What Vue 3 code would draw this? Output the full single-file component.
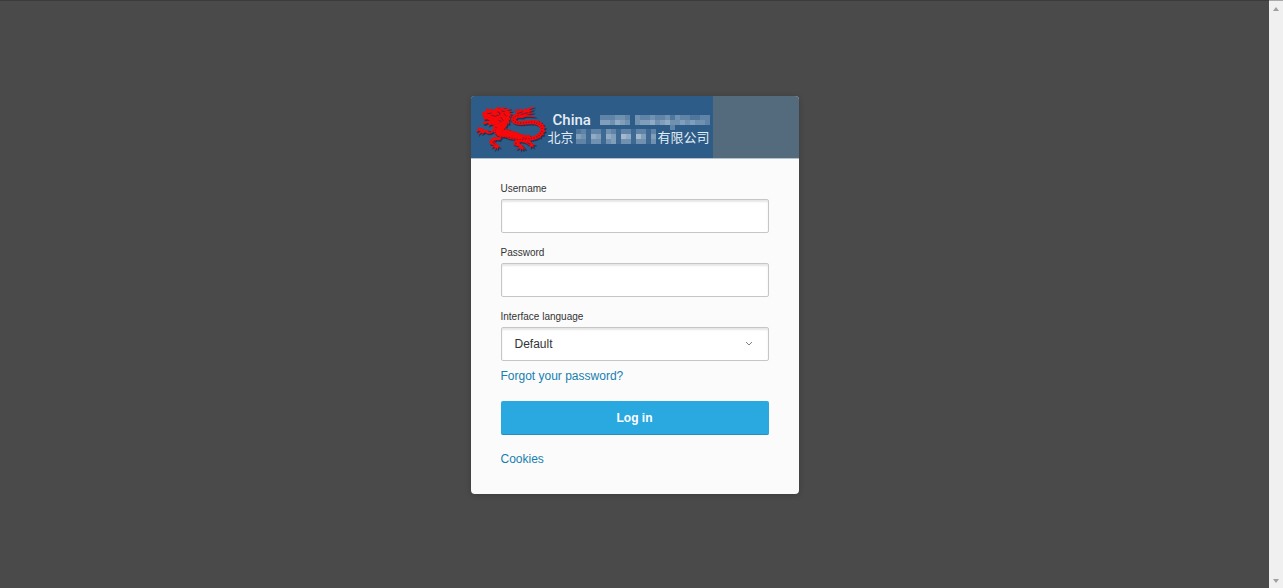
<template>
  <div class="screen">
    <main class="page">
      <section class="card">
        <header class="card-header">
          <div class="brand">
            <svg class="dragon" viewBox="30 48 213 141" aria-hidden="true">
              <g class="dragon-shade" transform="translate(3 4)">
                <path v-for="(d, i) in dragonParts" :key="i" :d="d" />
                <path class="dragon-tail" :d="dragonTail" />
              </g>
              <g class="dragon-body">
                <path v-for="(d, i) in dragonParts" :key="i" :d="d" />
                <path class="dragon-tail" :d="dragonTail" />
              </g>
              <path class="dragon-scales" :d="dragonTail" />
              <path class="dragon-scales" :d="dragonBelly" />
              <path class="dragon-lines" :d="dragonLines" />
            </svg>
            <div class="brand-text">
              <div class="line line-en">
                <span>China</span>
                <svg class="mosaic mosaic-en" viewBox="0 0 110 10" aria-hidden="true">
                  <rect v-for="(c, i) in enCells" :key="i" :x="c.x" :y="c.y" width="5" height="5" :fill-opacity="c.o" />
                </svg>
              </div>
              <div class="line line-zh" lang="zh">
                <span>北京</span>
                <svg class="mosaic mosaic-zh" viewBox="0 0 80 15" aria-hidden="true">
                  <rect v-for="(c, i) in zhCells" :key="i" :x="c.x" :y="c.y" width="5" height="5" :fill-opacity="c.o" />
                </svg>
                <span>有限公司</span>
              </div>
            </div>
          </div>
        </header>

        <form class="form" @submit.prevent>
          <div class="field">
            <label for="username">Username</label>
            <input id="username" v-model="username" type="text" autocomplete="username" />
          </div>
          <div class="field">
            <label for="password">Password</label>
            <input id="password" v-model="password" type="password" autocomplete="current-password" />
          </div>
          <div class="field">
            <label for="language">Interface language</label>
            <div class="select-wrap">
              <select id="language" v-model="language">
                <option value="default">Default</option>
              </select>
              <svg class="chevron" viewBox="0 0 8 6" aria-hidden="true">
                <path d="M1 1l3 3 3-3" />
              </svg>
            </div>
          </div>
          <a class="link" href="#">Forgot your password?</a>
          <button class="login" type="submit">Log in</button>
          <a class="link" href="#">Cookies</a>
        </form>
      </section>
    </main>

    <div class="scrollbar" aria-hidden="true">
      <svg viewBox="0 0 6 4"><path d="M0 4l3-4 3 4z" /></svg>
      <svg viewBox="0 0 6 4"><path d="M0 0l3 4 3-4z" /></svg>
    </div>
  </div>
</template>

<script setup>
import { ref } from 'vue'

const username = ref('')
const password = ref('')
const language = ref('default')

// Each digit is the brightness of one 5px cell
const toCells = (rows) =>
  rows.flatMap((row, y) =>
    [...row].map((n, x) => ({ x: x * 5, y: y * 5, o: Number(n) / 10 }))
  )

const enCells = toCells([
  '3334430433433424332233',
  '5546540455645644545443',
  '0000000000000030000000'
])

const zhCells = toCells([
  '2313314313313313',
  '5416516517617515',
  '3314414514414414'
])

const dragonParts = [
  // head and horns
  'M48 69l6-4 6-2 2-4-2-6 8 5 6 1 2-5 3 5 8-1 6-6 8-2-4 6 10-3 12-2-9 6 12-1 13-1-12 6 8 1 9 0-11 5 8 3 5 5-10-2 5 9-8-4 4 9 1 6-6-5 2 8-1 8-4-6-2 9-6 8-9 7-9 8-3 8-7-6 1-10 7-9 9-7-4-5-6 0-6 5-4 6-4-8-8 0-7 4 2-6-5-3-7 4-6-1 1-6 9-3 12-1-10-4-9 1z',
  // chest and belly
  'M91 100l16 2-2 8 0 8 6 5 11 2 15-2 14 3 14 6 14 4 14-1-2 12-15 2-16-3-14 3-16-2-13-5-16-1-13-8-8-11 1-14 6-10z',
  // front leg, left
  'M80 120l-9 4-6-3-8-1-9-5-8-1-2-4-4 4 4 4-6 2-2 6 8-4 6 2-6 4-2 8 6-7 6-1-1 6 5-4 5-3 8 4 8 0 8-4z',
  // front leg, lower
  'M83 141l-8 6-5 7 1 8 8 3 7 2-7 1-3 6 7-4 4 1-2 10 6-8 3 7 3-9 7 3-6-8-8-6-5-6 6-4 11 1 5-9z',
  // back leg
  'M150 148l-6 8-2 8 10 3 9 3-7 3-4 6 9-4 4 0-1 8 5-7 5 6 0-7 8 4-5-8-9-7-7-6 5-2 13 2 8 5 7 5 0 7 5-6 7 5-3-8 9-2-10-3-7-8-12-7z',
  // spines along the back
  'M110 122l1-8 5 7 4-8 4 9 5-7 3 10 6-5 3 9 7-5 3 9 7-4 3 8 8-3 3 7 10-4 0 9-16 5-20-6-24-6-14-2z',
  'M206 90l8 3 4-4 1 7 8-1-1 6 9 2-4 5 9 5-7 4 6 8-8 2 3 8-9 1-1 8-8-4-4 7-6-6 14-9 5-12-5-12-14-8z',
  // flame at the tip of the tail
  'M151 70l-7-13 11 8-2-12 9 9 3-7 4 6 12-8-3 7 14-8 14-2-12 6-5 5 16-4-11 7-9 4 20-1-13 5-11 3 16 1 14 5-17-1-15 0-10 4-13-1-8 8-7 6-3-8 6-8-6-2 8-4z'
]

const dragonTail =
  'M158 77Q141 78 141 89Q145 99 166 99L198 96Q222 98 229 114Q229 135 207 143Q189 149 171 143'

const dragonBelly = 'M91 111Q82 128 94 137Q111 143 128 142L153 148Q167 150 179 147'

const dragonLines =
  'M64 70l8 1 5-3M76 76l12 3 8-4M93 65l10 4-5 8M106 62l11 4M113 71l9 8M104 82l8 10M98 91l9 4M154 71l17-6M164 74l22-6M75 126l-9-3M87 151l-7 6 8 6M151 157l-3 6M169 169l7 4M184 158l9 5'
</script>

<style>
body {
  margin: 0;
  background: #4a4a4a;
}
</style>

<style scoped>
.screen {
  display: flex;
  min-height: 100vh;
  font-family: "Liberation Sans", Arial, sans-serif;
  font-size: 12px;
  line-height: 16px;
  color: #333;
  background: #4a4a4a;
}

.page {
  flex: 1;
  display: flex;
  justify-content: center;
  align-items: flex-start;
  box-sizing: border-box;
  padding: 95px 16px 32px;
  border-top: 1px solid #3a3a3a;
}

.card {
  width: 100%;
  max-width: 328px;
  overflow: hidden;
  background: #fbfbfb;
  border-radius: 4px;
  box-shadow: 0 1px 6px rgba(0, 0, 0, 0.2);
}

.card-header {
  display: flex;
  background: #546a7d;
  border-bottom: 1px solid #b4c2d0;
}

.brand {
  display: flex;
  align-items: center;
  box-sizing: border-box;
  width: 242px;
  height: 62px;
  padding-left: 5px;
  background: #2d5c88;
}

.dragon {
  flex: none;
  width: 71px;
  height: 47px;
  margin-top: 4px;
}

.dragon-body {
  fill: #f80808;
}

.dragon-shade {
  fill: #173858;
  stroke: #173858;
}

.dragon-tail {
  fill: none;
  stroke-width: 12px;
}

.dragon-body .dragon-tail {
  stroke: #f80808;
}

.dragon-scales {
  fill: none;
  stroke: #7d1830;
  stroke-width: 4px;
  stroke-dasharray: 3 5;
}

.dragon-lines {
  fill: none;
  stroke: #6b1e3c;
  stroke-width: 3px;
}

.brand-text {
  padding: 2px 0 0 1px;
  color: #e4edf5;
}

.line {
  display: flex;
  align-items: center;
  height: 17px;
  white-space: nowrap;
}

.line-en {
  gap: 9px;
  padding-left: 5px;
  font-family: Roboto, "Liberation Sans", sans-serif;
  font-size: 15px;
  font-weight: 500;
}

.line-zh {
  gap: 2px;
  font-family: "Noto Sans CJK SC", sans-serif;
  font-size: 13px;
}

.mosaic {
  flex: none;
  overflow: visible;
  fill: #d5e0ee;
  shape-rendering: crispEdges;
}

.mosaic-en {
  width: 110px;
  height: 10px;
}

.mosaic-zh {
  width: 80px;
  height: 15px;
}

.form {
  display: flex;
  flex-direction: column;
  align-items: flex-start;
  padding: 22px 30px 27px;
}

.field {
  display: flex;
  flex-direction: column;
  gap: 2px;
  width: 100%;
  margin-bottom: 12px;
}

.field:nth-of-type(3) {
  margin-bottom: 7px;
}

label {
  font-size: 10px;
}

input,
select {
  box-sizing: border-box;
  width: 100%;
  height: 34px;
  padding: 0 13px;
  border: 1px solid #c6c6c6;
  border-radius: 2px;
  background: #fff;
  box-shadow: inset 0 2px 2px rgba(0, 0, 0, 0.1);
  font: inherit;
  color: #333;
  outline: none;
}

select {
  appearance: none;
}

.select-wrap {
  position: relative;
}

.chevron {
  position: absolute;
  top: 14px;
  right: 16px;
  width: 8px;
  height: 6px;
  fill: none;
  stroke: #808080;
  stroke-width: 1px;
  pointer-events: none;
}

.link {
  color: #167fb0;
  text-decoration: none;
}

.login {
  width: 100%;
  height: 34px;
  margin: 17px 0 16px;
  padding: 0;
  border: 0;
  border-bottom: 1px solid #2390be;
  border-radius: 2px;
  background: #29a9df;
  color: #fff;
  font: inherit;
  font-weight: bold;
  cursor: pointer;
}

.scrollbar {
  display: flex;
  flex-direction: column;
  justify-content: space-between;
  align-items: center;
  box-sizing: border-box;
  width: 14px;
  padding: 6px 0 5px;
  border-top: 1px solid #aaa;
  background: #f0f0f0;
}

.scrollbar svg {
  width: 6px;
  height: 4px;
  fill: #a0a0a0;
}
</style>
